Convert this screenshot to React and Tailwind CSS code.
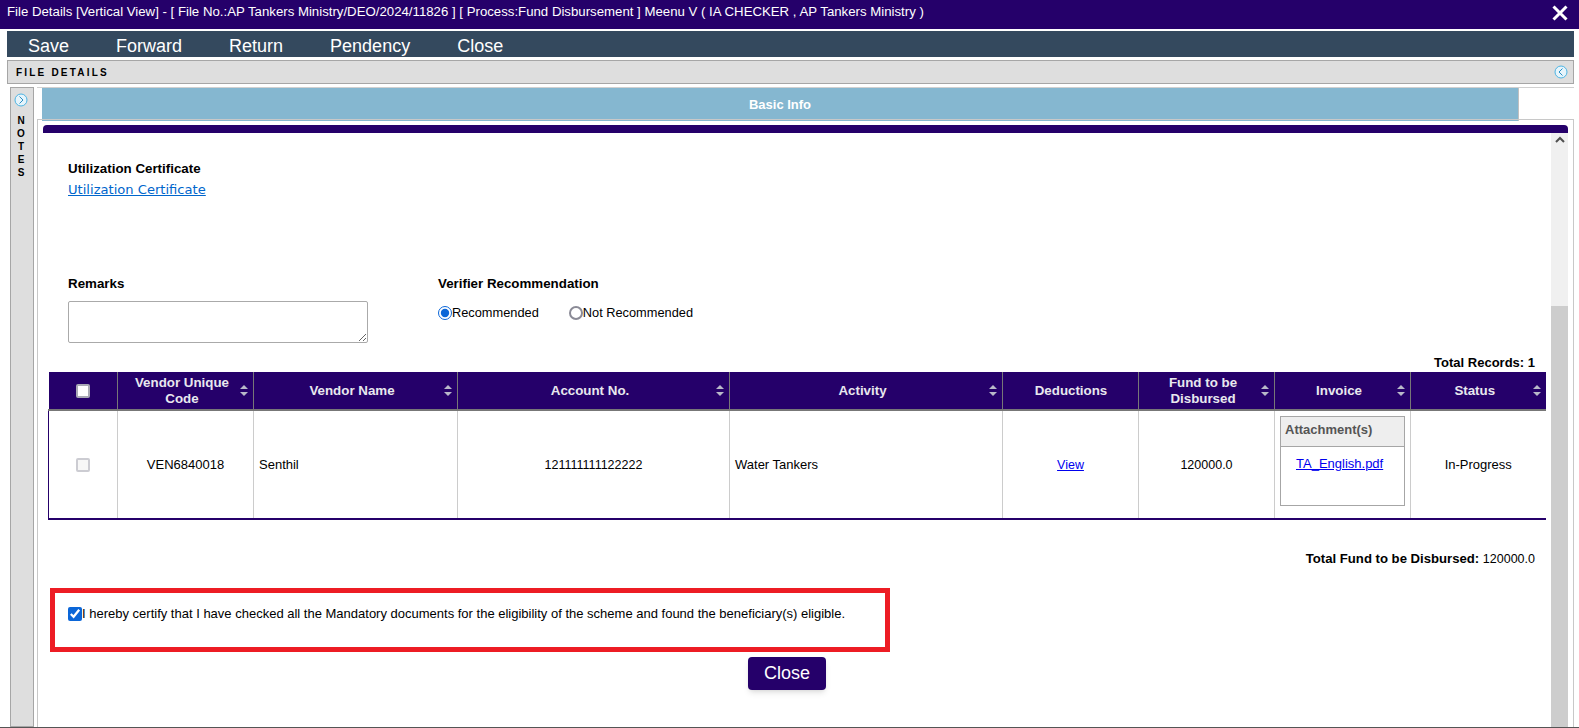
import { useState } from 'react'

const COLUMNS = [
  { label: 'Vendor Unique Code', w: 'w-[136px]', sort: true, lines: ['Vendor Unique', 'Code'] },
  { label: 'Vendor Name', w: 'w-[204px]', sort: true },
  { label: 'Account No.', w: 'w-[272px]', sort: true },
  { label: 'Activity', w: 'w-[273px]', sort: true },
  { label: 'Deductions', w: 'w-[136px]', sort: false },
  { label: 'Fund to be Disbursed', w: 'w-[136px]', sort: true, lines: ['Fund to be', 'Disbursed'] },
  { label: 'Invoice', w: 'w-[136px]', sort: true },
  { label: 'Status', w: 'w-[135px]', sort: true },
]

const MENU = ['Save', 'Forward', 'Return', 'Pendency', 'Close']

function SortArrows() {
  return (
    <svg width="8" height="11" viewBox="0 0 8 11" className="shrink-0">
      <path d="M4 0 L8 4 L0 4 Z M0 7 L8 7 L4 11 Z" fill="#b9b9c9" />
    </svg>
  )
}

function RoundChevron({ dir }) {
  return (
    <svg width="14" height="14" viewBox="0 0 14 14" className="shrink-0">
      <circle cx="7" cy="7" r="6" fill="#e6f4fb" stroke="#4db5e4" strokeWidth="1" />
      <path d={dir === 'left' ? 'M8.5 3.5 L5 7 L8.5 10.5' : 'M5.5 3.5 L9 7 L5.5 10.5'} fill="none" stroke="#2a8fc4" strokeWidth="1" />
    </svg>
  )
}

export default function App() {
  const [remarks, setRemarks] = useState('')

  return (
    <div className="h-[728px] overflow-hidden flex flex-col bg-white border-b border-[#555] text-black text-[13px] font-['Liberation_Sans',Arial,sans-serif]">
      <div className="h-[29px] shrink-0 bg-[#25006a] text-white flex items-center justify-between pl-[7px] pr-[11px]">
        <span className="text-[13.23px] pb-[5px]">
          File Details [Vertical View] - [ File No.:AP Tankers Ministry/DEO/2024/11826 ] [ Process:Fund Disbursement ] Meenu V ( IA CHECKER , AP Tankers Ministry )
        </span>
        <svg width="16" height="16" viewBox="0 0 16 16" className="mb-[3px]">
          <path d="M1.5 1.5 L14.5 14.5 M14.5 1.5 L1.5 14.5" stroke="#fff" strokeWidth="3" />
        </svg>
      </div>

      <div className="h-[26px] shrink-0 mt-[2px] mx-[7px] mr-[5px] bg-[#34495e] text-white text-[18px] flex items-center pl-[21px] gap-[47px] pt-[4px]">
        {MENU.map((m) => (
          <span key={m}>{m}</span>
        ))}
      </div>

      <div className="h-[24px] shrink-0 mt-[3px] ml-[7px] mr-[5px] bg-[#dedede] border border-[#a6a6a6] flex items-center justify-between pl-[8px] pr-[5px]">
        <span className="text-[10px] font-bold tracking-[0.22em]">FILE DETAILS</span>
        <RoundChevron dir="left" />
      </div>

      <div className="flex-1 min-h-0 flex mt-[3px] ml-[10px] mr-[5px]">
        <div className="w-[24px] shrink-0 bg-[#dedede] border border-[#a6a6a6] flex flex-col items-center pt-[5px] pr-[2px]">
          <RoundChevron dir="right" />
          <div className="mt-[7px] flex flex-col items-center font-bold text-[10px] leading-[13px]">
            {'NOTES'.split('').map((c, i) => (
              <span key={i}>{c}</span>
            ))}
          </div>
        </div>

        <div className="flex-1 min-w-0 ml-[3px] flex flex-col border-t border-[#d0d0d0]">
          <div className="h-[33px] shrink-0 ml-[5px] mr-[55px] bg-[#85b7d0] text-white font-bold flex items-center justify-center border-r border-[#c0c0c0]">
            Basic Info
          </div>
          <div className="flex-1 min-h-0 -mt-[2px] border border-[#c8c8c8] border-b-0 pt-[5px] pl-[5px] pr-[5px] flex flex-col">
            <div className="h-[8px] shrink-0 bg-[#25006a] rounded-t-[4px]" />
            <div className="flex-1 min-h-0 flex">
              <div className="flex-1 min-w-0 px-[5px]">
                <div className="pt-[29px] pl-[20px]">
                  <div className="font-bold leading-[14px] text-[13.33px]">Utilization Certificate</div>
                  <a href="#" className="block w-fit mt-[7px] text-[13.1px] leading-[14px] underline text-[#0066cc] font-['DejaVu_Sans',sans-serif]">
                    Utilization Certificate
                  </a>
                </div>

                <div className="mt-[80px] pl-[20px] flex">
                  <div className="w-[370px] shrink-0">
                    <div className="font-bold leading-[14px] text-[13.33px]">Remarks</div>
                    <textarea
                      value={remarks}
                      onChange={(e) => setRemarks(e.target.value)}
                      className="block mt-[10px] w-[300px] h-[42px] border border-[#aaa] rounded-[2px] bg-white"
                    />
                  </div>
                  <div>
                    <div className="font-bold leading-[14px] text-[13.33px]">Verifier Recommendation</div>
                    <div className="mt-[12px] flex items-center text-[12.8px]">
                      <label className="flex items-center">
                        <input type="radio" name="rec" defaultChecked className="w-[14px] h-[14px] m-0 accent-[#0b66d8]" />
                        Recommended
                      </label>
                      <label className="flex items-center ml-[30px]">
                        <input type="radio" name="rec" className="appearance-none w-[14px] h-[14px] m-0 rounded-full border-2 border-[#8a8a96] bg-white" />
                        Not Recommended
                      </label>
                    </div>
                  </div>
                </div>

                <div className="mt-[13px] text-right pr-[11px] leading-[14px] font-bold">
                  Total Records: <span>1</span>
                </div>

                <table className="mt-[2px] w-[1497px] table-fixed border-collapse">
                  <thead>
                    <tr className="h-[38px] bg-[#25006a] text-[#e8e8ee]">
                      <th className="w-[69px] p-0 border-b-2 border-[#777]">
                        <input type="checkbox" className="appearance-none block mx-auto w-[14px] h-[14px] m-0 bg-white border-2 border-[#a9a9b5] rounded-[2px]" />
                      </th>
                      {COLUMNS.map((c) => (
                        <th key={c.label} className={`${c.w} p-0 border-l border-b-2 border-[#777] font-bold text-[13.33px]`}>
                          <div className="flex items-center justify-between pl-[6px] pr-[5px] leading-[16px]">
                            <span className="flex-1 text-center">
                              {c.lines ? c.lines.map((l) => <div key={l}>{l}</div>) : c.label}
                            </span>
                            {c.sort && <SortArrows />}
                          </div>
                        </th>
                      ))}
                    </tr>
                  </thead>
                  <tbody>
                    <tr className="h-[109px] border-b-2 border-[#25006a] border-l border-l-[#25006a]">
                      <td className="p-0">
                        <input type="checkbox" disabled className="appearance-none block mx-auto w-[14px] h-[14px] m-0 bg-[#f7f7f7] border-2 border-[#ccccd2] rounded-[2px]" />
                      </td>
                      <td className="p-0 text-center border-l border-[#ccc]">VEN6840018</td>
                      <td className="py-0 px-[5px] border-l border-[#ccc]">Senthil</td>
                      <td className="p-0 pt-px text-center border-l border-[#ccc] text-[12.5px]">121111111122222</td>
                      <td className="py-0 px-[5px] border-l border-[#ccc]">Water Tankers</td>
                      <td className="p-0 pt-px text-center border-l border-[#ccc] text-[12.5px]">
                        <a href="#" className="underline text-[#0000ee]">View</a>
                      </td>
                      <td className="p-0 pt-px text-center border-l border-[#ccc] text-[12.5px]">120000.0</td>
                      <td className="pt-[5px] px-0 pb-0 align-top border-l border-[#ccc]">
                        <div className="mx-[5px] h-[90px] border border-[#a6a6a6]">
                          <div className="h-[30px] bg-[#eee] border-b border-[#a6a6a6] text-[#555] font-bold pl-[4px] pb-[4px] flex items-center">
                            Attachment(s)
                          </div>
                          <div className="pt-[10px] pl-[15px] leading-[14px]">
                            <a href="#" className="underline text-[#0000ee]">TA_English.pdf</a>
                          </div>
                        </div>
                      </td>
                      <td className="p-0 text-center border-l border-[#ccc]">In-Progress</td>
                    </tr>
                  </tbody>
                </table>

                <div className="mt-[32px] text-right pr-[11px] leading-[14px]">
                  <span className="font-bold text-[13.15px]">Total Fund to be Disbursed:</span> <span className="text-[12.5px]">120000.0</span>
                </div>

                <div className="mt-[22px] ml-[2px] w-[840px] h-[64px] border-[5px] border-[#ed1c24] pl-[13px] pt-[14px] flex items-start">
                  <input type="checkbox" defaultChecked className="w-[14px] h-[14px] m-0 shrink-0 accent-[#0b66d8]" />
                  <span className="leading-[14px]">I hereby certify that I have checked all the Mandatory documents for the eligibility of the scheme and found the beneficiary(s) eligible.</span>
                </div>

                <button className="block mt-[5px] ml-[700px] w-[78px] h-[33px] bg-[#25006a] text-white text-[18px] rounded-[4px] shadow-md">
                  Close
                </button>
              </div>

              <div className="w-[17px] shrink-0 bg-[#f0f0f0] flex flex-col">
                <div className="h-[173px] shrink-0 pt-[3px] flex justify-center">
                  <svg width="10" height="8" viewBox="0 0 10 8">
                    <path d="M1 6 L5 2 L9 6" fill="none" stroke="#505050" strokeWidth="2" />
                  </svg>
                </div>
                <div className="flex-1 bg-[#cdcdcd]" />
              </div>
            </div>
          </div>
        </div>
      </div>
    </div>
  )
}
